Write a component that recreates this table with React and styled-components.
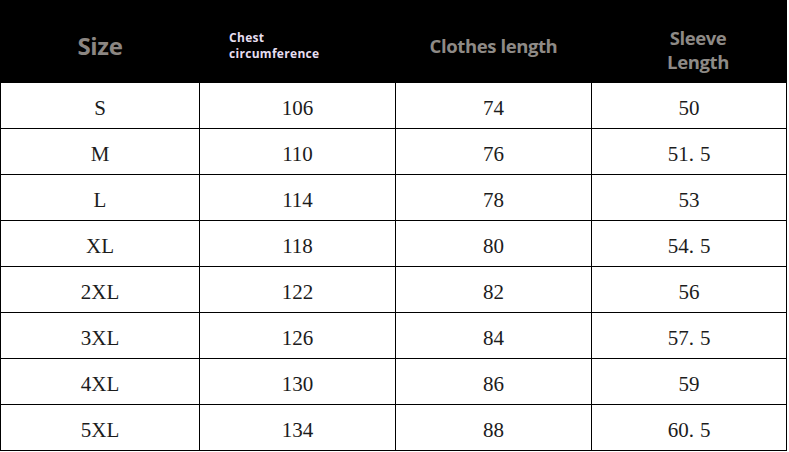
import styled, { createGlobalStyle } from 'styled-components';

const GlobalStyle = createGlobalStyle`
  html, body {
    margin: 0;
    padding: 0;
    background: #fff;
  }
`

const rows = [
  ['S', '106', '74', '50'],
  ['M', '110', '76', '51.5'],
  ['L', '114', '78', '53'],
  ['XL', '118', '80', '54.5'],
  ['2XL', '122', '82', '56'],
  ['3XL', '126', '84', '57.5'],
  ['4XL', '130', '86', '59'],
  ['5XL', '134', '88', '60.5'],
];

// the dot in the original font leaves a wide gap after it
const Value = ({ text }) => {
  const [whole, frac] = text.split('.');
  if (frac === undefined) return text;
  return (
    <>
      {whole}
      <Dot>.</Dot>
      {frac}
    </>
  );
};

const App = () => {
  return (
    <>
      <GlobalStyle />
      <Table>
        <HeadCell>
          <BigTitle>Size</BigTitle>
        </HeadCell>
        <HeadCell $align="flex-start" $padLeft="29px">
          <SmallTitle>
            Chest
            <br />
            circumference
          </SmallTitle>
        </HeadCell>
        <HeadCell>
          <MidTitle>Clothes length</MidTitle>
        </HeadCell>
        <HeadCell $padLeft="18px">
          <MidTitle $lines>
            Sleeve
            <br />
            Length
          </MidTitle>
        </HeadCell>
        {rows.map((row) =>
          row.map((value, i) => (
            <Cell key={row[0] + i}>
              <Value text={value} />
            </Cell>
          ))
        )}
      </Table>
    </>
  );
};

const Table = styled.div`
  display: grid;
  grid-template-columns: 198px 195px 195px 194px;
  grid-template-rows: 82px repeat(8, 45px);
  gap: 1px;
  width: 787px;
  padding: 0 1px 1px 1px;
  box-sizing: border-box;
  background: #000;
`

const HeadCell = styled.div`
  background: #000;
  display: flex;
  align-items: center;
  justify-content: ${(p) => p.$align || 'center'};
  padding-left: ${(p) => p.$padLeft || '0'};
  padding-top: 8px;
  font-family: "Open Sans", "DejaVu Sans", sans-serif;
  font-weight: 700;
`

const BigTitle = styled.span`
  font-size: 24px;
  color: #8b8682;
  letter-spacing: -0.3px;
`

const SmallTitle = styled.span`
  font-size: 12px;
  line-height: 16px;
  color: #e6def0;
  letter-spacing: 0.3px;
  margin-top: 2px;
`

const MidTitle = styled.span`
  font-size: 18.5px;
  line-height: ${(p) => (p.$lines ? '24px' : '22px')};
  color: #8e8a86;
  letter-spacing: -0.4px;
  text-align: center;
  margin-top: ${(p) => (p.$lines ? '10px' : '2px')};
`

const Cell = styled.div`
  background: #fff;
  display: flex;
  align-items: center;
  justify-content: center;
  padding-top: 5px;
  box-sizing: border-box;
  font-family: "Liberation Serif", "DejaVu Serif", serif;
  font-size: 21px;
  color: #1c1c1c;
`

const Dot = styled.span`
  margin-right: 6px;
`

export default App;
